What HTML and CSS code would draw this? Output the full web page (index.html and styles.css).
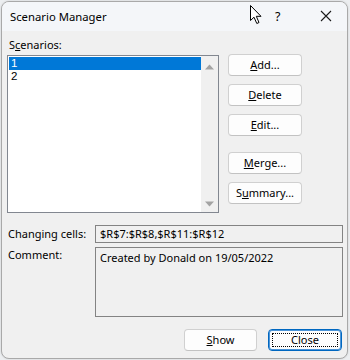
FILE: index.html
```html
<!DOCTYPE html>
<html>
<head>
<meta charset="utf-8">
<link rel="stylesheet" href="styles.css">
</head>
<body>
<div class="window">
  <div class="titlebar">
    <span class="title">Scenario Manager</span>
    <span class="help">?</span>
    <span class="close-x">
      <svg width="12" height="12" viewBox="0 0 12 12"><path d="M1 1 L11 11 M11 1 L1 11" stroke="#1a1a1a" stroke-width="1.1" fill="none"/></svg>
    </span>
    <svg class="cursor" width="14" height="20" viewBox="0 0 14 20"><path d="M0.5 0.5 L0.5 15.5 L4 12.2 L6.8 18.5 L9 17.5 L6.3 11.3 L11 11.3 Z" fill="#fff" stroke="#000" stroke-width="1" stroke-linejoin="round"/></svg>
  </div>
  <div class="body">
    <div class="label">S<u>c</u>enarios:</div>
    <div class="main">
      <div class="listbox">
        <div class="items">
          <div class="item selected">1</div>
          <div class="item">2</div>
        </div>
        <div class="scroll">
          <svg width="9" height="6" viewBox="0 0 9 6"><path d="M0 5.5 L4.5 0.5 L9 5.5 Z" fill="#a3a3a3"/></svg>
          <svg width="9" height="6" viewBox="0 0 9 6"><path d="M0 0.5 L4.5 5.5 L9 0.5 Z" fill="#a3a3a3"/></svg>
        </div>
      </div>
      <div class="side">
        <div class="btn"><u>A</u>dd...</div>
        <div class="btn"><u>D</u>elete</div>
        <div class="btn"><u>E</u>dit...</div>
        <div class="btn sep"><u>M</u>erge...</div>
        <div class="btn">S<u>u</u>mmary...</div>
      </div>
    </div>
    <div class="row row-cells">
      <div class="row-label">Changing cells:</div>
      <div class="input">$R$7:$R$8,$R$11:$R$12</div>
    </div>
    <div class="row row-comment">
      <div class="row-label top">Comment:</div>
      <div class="textarea">Created by Donald on 19/05/2022</div>
    </div>
    <div class="footer">
      <div class="btn show"><u>S</u>how</div>
      <div class="btn close"><span class="focus">Close</span></div>
    </div>
  </div>
</div>
</body>
</html>
```
FILE: styles.css
```css
html, body {
  margin: 0;
  padding: 0;
}
body {
  width: 350px;
  height: 360px;
  background: #eceef0;
  font-family: "Noto Sans", "Liberation Sans", sans-serif;
  font-size: 11px;
  color: #000;
  overflow: hidden;
}
.window {
  margin: 1px 0 0 1px;
  width: 347px;
  height: 358px;
  box-sizing: border-box;
  border: 1px solid #a9a9a9;
  border-radius: 8px;
  background: #f0f0f0;
  overflow: hidden;
  box-shadow: 0 0 2px rgba(0,0,0,0.15);
}
.titlebar {
  position: relative;
  height: 29px;
  background: #f4f6f9;
  display: flex;
  align-items: center;
  padding-left: 8px;
}
.title {
  font-size: 11.3px;
  flex: 1;
  padding-bottom: 1px;
}
.help {
  font-size: 12.5px;
  width: 10px;
  margin-right: 35px;
  padding-bottom: 1px;
}
.close-x {
  display: flex;
  width: 12px;
  height: 12px;
  margin-right: 15px;
  margin-bottom: 1px;
}
.cursor {
  position: absolute;
  left: 248px;
  top: 3px;
}
.body {
  padding: 0 0 0 5px;
}
.label {
  height: 14px;
  line-height: 14px;
  margin-top: 7px;
  padding-left: 2px;
}
.main {
  display: flex;
  margin-top: 2px;
}
.listbox {
  margin-top: 1px;
  width: 212px;
  height: 158px;
  box-sizing: border-box;
  border: 1px solid #828790;
  background: #fff;
  display: flex;
}
.items {
  flex: 1;
  padding: 1px 0 0 1px;
}
.item {
  height: 13px;
  line-height: 13px;
  padding-left: 2px;
  font-family: "Liberation Sans", "Noto Sans", sans-serif;
  font-size: 11.5px;
}
.item.selected {
  background: #0078d7;
  color: #fff;
}
.scroll {
  width: 17px;
  background: #f0f0f0;
  display: flex;
  flex-direction: column;
  justify-content: space-between;
  align-items: center;
  padding: 8px 0 5px;
}
.side {
  margin-left: 9px;
  display: flex;
  flex-direction: column;
  gap: 8px;
}
.btn {
  width: 74px;
  height: 22px;
  box-sizing: border-box;
  border: 1px solid #d0d0d0;
  border-bottom-color: #c2c2c2;
  border-radius: 4px;
  background: #fdfdfd;
  display: flex;
  align-items: center;
  justify-content: center;
  line-height: 14px;
}
.btn.sep {
  margin-top: 8px;
}
.row {
  display: flex;
  align-items: center;
  padding-left: 1px;
}
.row-cells {
  margin-top: 12px;
}
.row-comment {
  margin-top: 4px;
  align-items: flex-start;
}
.row-label {
  width: 87px;
  line-height: 14px;
}
.row-label.top {
  margin-top: 1px;
}
.input {
  width: 248px;
  height: 18px;
  box-sizing: border-box;
  border: 1px solid #838383;
  padding-left: 4px;
  line-height: 16px;
}
.textarea {
  width: 248px;
  height: 70px;
  box-sizing: border-box;
  border: 1px solid #838383;
  padding: 3px 0 0 4px;
  line-height: 14px;
}
.footer {
  display: flex;
  margin-top: 12px;
  padding-left: 177px;
  gap: 11px;
}
.btn.show {
  width: 73px;
}
.btn.close {
  border: 1px solid #0067c0;
  box-shadow: inset 0 0 0 1px #4d95d8;
  padding: 3px;
}
.focus {
  flex: 1;
  align-self: stretch;
  border: 1px dotted #000;
  display: flex;
  align-items: center;
  justify-content: center;
}
```
